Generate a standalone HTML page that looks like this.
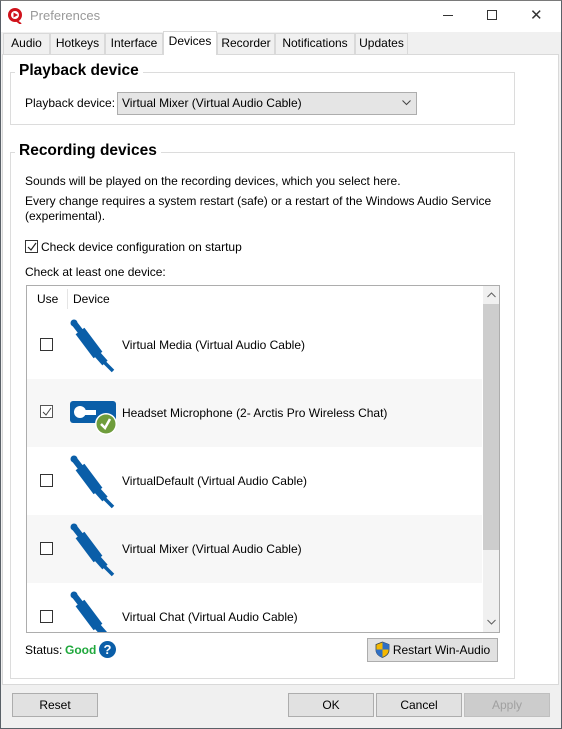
<!DOCTYPE html>
<html><head><style>
*{margin:0;padding:0;box-sizing:border-box}
body{width:562px;height:729px;position:relative;background:#f0f0f0;font-family:"Liberation Sans",sans-serif;font-size:12px;color:#000;overflow:hidden}
.a{position:absolute}
.win{left:0;top:0;width:562px;height:729px;border:1px solid #5a6168;border-top-color:#7a7a7a}
.tab{position:absolute;top:33px;height:21px;border:1px solid #d9d9d9;border-bottom:none;background:#f0f0f0;font-size:12px;line-height:19px;text-align:center}
.btn{position:absolute;height:24px;border:1px solid #adadad;background:#e1e1e1;text-align:center;line-height:22px;font-size:12px}
.grp{position:absolute;border:1px solid #dcdcdc}
.gt{position:absolute;background:#fff;font-weight:bold;font-size:15.5px;padding:0 4px}
.cb{position:absolute;width:13px;height:13px;border:1px solid #333;background:#fff}
.row{position:absolute;left:27px;width:455px;height:68px}
.lbl{position:absolute;left:95px;top:27px;font-size:12px}
</style></head><body>
<div class="a" style="left:0;top:0;width:562px;height:32px;background:#fff"></div>
<svg class="a" style="left:7px;top:7px" width="17" height="17" viewBox="0 0 17 17"><circle cx="8" cy="8" r="7" fill="#d0121b"/><circle cx="8" cy="8" r="4" fill="#fff"/><path d="M6.5 5.5L11 8L6.5 10.5Z" fill="#d0121b"/><path d="M10 14l4 3" stroke="#d0121b" stroke-width="2"/></svg>
<div class="a" style="left:30px;top:8px;color:#999;font-size:13px">Preferences</div>
<div class="a" style="left:443px;top:15px;width:10px;height:1px;background:#333"></div>
<div class="a" style="left:487px;top:10px;width:10px;height:10px;border:1px solid #333"></div>
<div class="a" style="left:530px;top:6px;font-size:15px;color:#333">✕</div>
<div class="a" style="left:2px;top:54px;width:557px;height:631px;background:#fff;border:1px solid #d9d9d9"></div>
<div class="tab" style="left:3px;width:47px">Audio</div>
<div class="tab" style="left:50px;width:55px">Hotkeys</div>
<div class="tab" style="left:105px;width:58px">Interface</div>
<div class="tab" style="left:163px;top:31px;height:24px;width:54px;background:#fff;z-index:2">Devices</div>
<div class="tab" style="left:217px;width:58px">Recorder</div>
<div class="tab" style="left:275px;width:80px">Notifications</div>
<div class="tab" style="left:355px;width:53px">Updates</div>

<div class="grp" style="left:10px;top:72px;width:505px;height:53px"></div>
<div class="gt" style="left:15px;top:62px">Playback device</div>
<div class="a" style="left:25px;top:96px">Playback device:</div>
<div class="a" style="left:117px;top:92px;width:300px;height:23px;border:1px solid #adadad;background:#e5e5e5;line-height:21px;padding-left:4px">Virtual Mixer (Virtual Audio Cable)</div>
<svg class="a" style="left:402px;top:100px" width="9" height="6"><path d="M0.5 0.5L4.5 4.5L8.5 0.5" stroke="#444" fill="none"/></svg>

<div class="grp" style="left:10px;top:152px;width:505px;height:527px"></div>
<div class="gt" style="left:15px;top:142px">Recording devices</div>
<div class="a" style="left:25px;top:174px">Sounds will be played on the recording devices, which you select here.</div>
<div class="a" style="left:25px;top:194px;line-height:15px">Every change requires a system restart (safe) or a restart of the Windows Audio Service<br>(experimental).</div>
<div class="cb" style="left:25px;top:240px"></div>
<svg class="a" style="left:27px;top:242px" width="10" height="10"><path d="M1 5l3 3l5-7" stroke="#222" fill="none" stroke-width="1.2"/></svg>
<div class="a" style="left:41px;top:240px">Check device configuration on startup</div>
<div class="a" style="left:25px;top:265px">Check at least one device:</div>

<div class="a" style="left:26px;top:285px;width:474px;height:348px;border:1px solid #adadad;background:#fff;overflow:hidden">
 <div class="a" style="left:10px;top:6px">Use</div>
 <div class="a" style="left:40px;top:3px;width:1px;height:20px;background:#e5e5e5"></div>
 <div class="a" style="left:46px;top:6px">Device</div>
 <div class="a" style="left:456px;top:0;width:17px;height:346px;background:#f0f0f0"></div>
 <div class="a" style="left:456px;top:18px;width:17px;height:246px;background:#cdcdcd"></div>
 <svg class="a" style="left:460px;top:6px" width="9" height="6"><path d="M0.5 5L4.5 1L8.5 5" stroke="#606060" fill="none"/></svg>
 <svg class="a" style="left:460px;top:333px" width="9" height="6"><path d="M0.5 1L4.5 5L8.5 1" stroke="#606060" fill="none"/></svg>
</div>
<svg width="0" height="0" style="position:absolute"><defs><g id="jack"><circle cx="4" cy="4" r="3.5" fill="#0a5ea8"/><path d="M4 4L11 13" stroke="#0a5ea8" stroke-width="6"/><path d="M10 12L28 36" stroke="#0a5ea8" stroke-width="11"/><path d="M27 35L35 44" stroke="#0a5ea8" stroke-width="7"/><path d="M34 43L43 52" stroke="#0a5ea8" stroke-width="3.5"/></g></defs></svg>
<div class="row" style="top:311px"><div class="cb" style="left:13px;top:27px"></div><svg class="a" style="left:43px;top:8px" width="46" height="54"><use href="#jack"/></svg><div class="lbl">Virtual Media (Virtual Audio Cable)</div></div>
<div class="row" style="top:379px;background:#f7f7f7"><div class="cb" style="left:13px;top:26px;border-color:#555"></div><svg class="a" style="left:15px;top:28px" width="10" height="10"><path d="M1 5l3 3l5-7" stroke="#444" fill="none"/></svg>
<svg class="a" style="left:43px;top:21px" width="50" height="36"><rect x="0" y="1" width="46" height="22" rx="3" fill="#0a5ea8"/><circle cx="10" cy="12" r="6" fill="#fff"/><rect x="12" y="10" width="14" height="5" fill="#fff"/><circle cx="36" cy="24" r="11" fill="#fff"/><circle cx="36" cy="24" r="9.5" fill="#6f9d3c"/><path d="M31 24l4 4l5-9" stroke="#fff" stroke-width="2.5" fill="none"/></svg>
<div class="lbl">Headset Microphone (2- Arctis Pro Wireless Chat)</div></div>
<div class="row" style="top:447px"><div class="cb" style="left:13px;top:27px"></div><svg class="a" style="left:43px;top:8px" width="46" height="54"><use href="#jack"/></svg><div class="lbl">VirtualDefault (Virtual Audio Cable)</div></div>
<div class="row" style="top:515px;background:#f7f7f7"><div class="cb" style="left:13px;top:27px"></div><svg class="a" style="left:43px;top:8px" width="46" height="54"><use href="#jack"/></svg><div class="lbl">Virtual Mixer (Virtual Audio Cable)</div></div>
<div class="row" style="top:583px;height:49px;overflow:hidden"><div class="cb" style="left:13px;top:27px"></div><svg class="a" style="left:43px;top:8px" width="46" height="54"><use href="#jack"/></svg><div class="lbl">Virtual Chat (Virtual Audio Cable)</div></div>

<div class="a" style="left:25px;top:643px">Status:</div>
<div class="a" style="left:65px;top:643px;color:#1fa83c;font-weight:bold">Good</div>
<div class="a" style="left:99px;top:641px;width:17px;height:17px;border-radius:50%;background:#0a5ea8;color:#fff;font-weight:bold;font-size:13px;text-align:center;line-height:17px">?</div>
<div class="btn" style="left:367px;top:638px;width:131px;padding-left:18px">Restart Win-Audio</div>
<svg class="a" style="left:375px;top:641px" width="15" height="17"><path d="M7.5 1L14 3.5V9C14 13 10.5 15.5 7.5 16.5C4.5 15.5 1 13 1 9V3.5Z" fill="#f5b800" stroke="#345" stroke-width=".8"/><path d="M7.5 1V8.5H14V3.5ZM7.5 8.5V16.5C4.5 15.5 1 13 1 9V8.5Z" fill="#2f6fc4"/></svg>

<div class="btn" style="left:12px;top:693px;width:86px">Reset</div>
<div class="btn" style="left:288px;top:693px;width:86px">OK</div>
<div class="btn" style="left:376px;top:693px;width:86px">Cancel</div>
<div class="btn" style="left:464px;top:693px;width:86px;color:#a0a0a0;border-color:#bfbfbf;background:#ccc">Apply</div>
<div class="a win"></div>
</body></html>
